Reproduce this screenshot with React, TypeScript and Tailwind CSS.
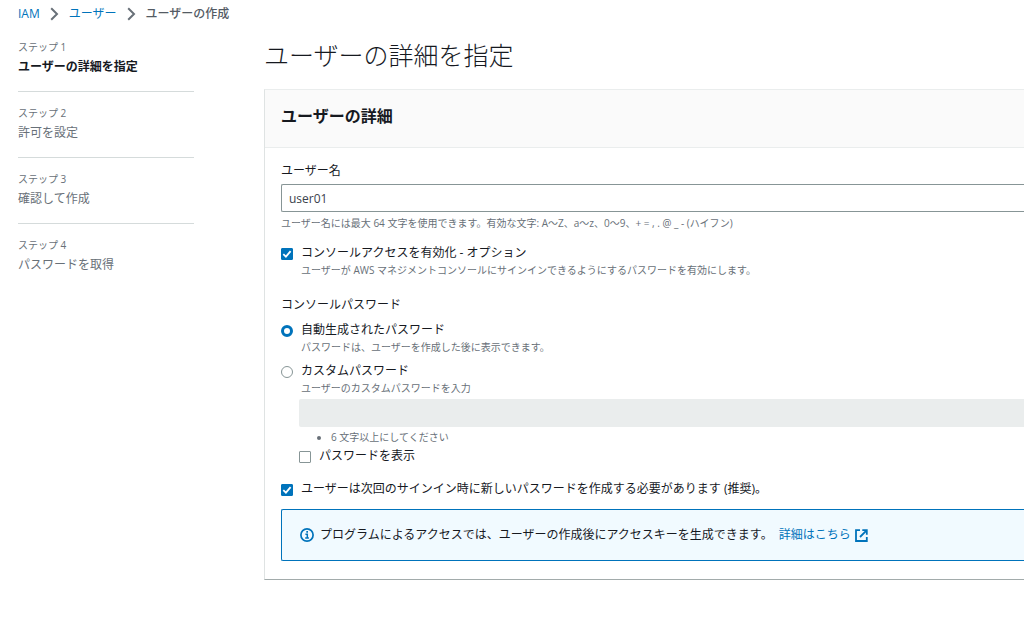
import { ReactNode, useState } from "react";

const steps = [
  "ユーザーの詳細を指定",
  "許可を設定",
  "確認して作成",
  "パスワードを取得",
];

function Chevron() {
  return (
    <svg aria-hidden="true" className="h-[14px] w-[9px] text-[#687078]" viewBox="0 0 9 14" fill="none" stroke="currentColor" strokeWidth="2">
      <path d="M1.2 1.2 7 7l-5.8 5.8" />
    </svg>
  );
}

function Checkbox({
  id,
  label,
  description,
  defaultChecked = false,
}: {
  id: string;
  label: string;
  description?: string;
  defaultChecked?: boolean;
}) {
  const [checked, setChecked] = useState(defaultChecked);
  return (
    <div className="flex gap-2">
      <span className="mt-1 grid size-3 shrink-0">
        <input
          id={id}
          type="checkbox"
          checked={checked}
          onChange={(e) => setChecked(e.target.checked)}
          className="col-start-1 row-start-1 size-3 appearance-none rounded-[1px] border border-[#879596] bg-white checked:border-[#0073bb] checked:bg-[#0073bb]"
        />
        {checked && (
          <svg aria-hidden="true" className="pointer-events-none col-start-1 row-start-1 size-3" viewBox="0 0 12 12" fill="none" stroke="#fff" strokeWidth="1.8">
            <path d="M2.3 6.2 4.9 8.7 9.6 3.2" />
          </svg>
        )}
      </span>
      <div>
        <label htmlFor={id} className="block">{label}</label>
        {description && <Hint>{description}</Hint>}
      </div>
    </div>
  );
}

function Radio({
  id,
  label,
  description,
  defaultChecked = false,
}: {
  id: string;
  label: string;
  description: string;
  defaultChecked?: boolean;
}) {
  return (
    <div className="flex gap-2">
      <input
        id={id}
        type="radio"
        name="console-password"
        defaultChecked={defaultChecked}
        className="mt-1 size-3 shrink-0 appearance-none rounded-full border border-[#879596] bg-white checked:border-[3px] checked:border-[#0073bb]"
      />
      <div>
        <label htmlFor={id} className="block">{label}</label>
        <Hint>{description}</Hint>
      </div>
    </div>
  );
}

function Hint({ children }: { children: ReactNode }) {
  return <p className="text-[10px] leading-4 text-[#687078]">{children}</p>;
}

export default function App() {
  return (
    <div className="overflow-hidden bg-white pb-10 pl-[18px] font-['Open_Sans','Noto_Sans_CJK_JP',sans-serif] text-[12px] leading-[18px] text-[#16191f]">
      <nav aria-label="パンくずリスト" className="pt-[5px]">
        <ol className="flex items-center gap-[10px]">
          <li><a href="#iam" className="text-[#0073bb]">IAM</a></li>
          <li><Chevron /></li>
          <li><a href="#users" className="text-[#0073bb]">ユーザー</a></li>
          <li><Chevron /></li>
          <li className="font-medium text-[#545b64]">ユーザーの作成</li>
        </ol>
      </nav>

      <div className="flex gap-[70px] pt-[15px]">
        <ol className="w-44 shrink-0 divide-y divide-[#d5dbdb]">
          {steps.map((step, i) => (
            <li key={step} className="pt-3 pb-[13px] first:pt-0">
              <p className="text-[10px] leading-[18px] text-[#687078]">ステップ {i + 1}</p>
              <p className={i === 0 ? "text-[12px] leading-[22px] font-bold" : "text-[12px] leading-[22px] text-[#687078]"}>{step}</p>
            </li>
          ))}
        </ol>

        <main className="min-w-0 grow">
          <h1 className="text-[25px] leading-[34px] font-light">ユーザーの詳細を指定</h1>

          <section className="mt-[17px] border-t border-b border-l border-t-[#eaeded] border-b-[#a2abab] border-l-[#dfe3e3]">
            <header className="border-b border-[#eaeded] bg-[#fafafa] pt-[14px] pb-[18px] pl-4">
              <h2 className="text-[16px] leading-[25px] font-bold">ユーザーの詳細</h2>
            </header>

            <form className="pt-[14px] pb-[18px] pl-4">
              <label htmlFor="user-name" className="block">ユーザー名</label>
              <input
                id="user-name"
                type="text"
                defaultValue="user01"
                className="mt-1 block h-7 w-full rounded-l-[2px] border border-r-0 border-[#879596] px-[7px] text-[#3a424c]"
              />
              <div className="mt-[3px]">
                <Hint>ユーザー名には最大 64 文字を使用できます。有効な文字: A〜Z、a〜z、0〜9、+ = , . @ _ - (ハイフン)</Hint>
              </div>

              <div className="mt-[13px]">
                <Checkbox
                  id="console-access"
                  label="コンソールアクセスを有効化 - オプション"
                  description="ユーザーが AWS マネジメントコンソールにサインインできるようにするパスワードを有効にします。"
                  defaultChecked
                />
              </div>

              <fieldset className="mt-[18px]">
                <legend>コンソールパスワード</legend>
                <div className="mt-[7px] flex flex-col gap-[7px]">
                  <Radio
                    id="password-auto"
                    label="自動生成されたパスワード"
                    description="パスワードは、ユーザーを作成した後に表示できます。"
                    defaultChecked
                  />
                  <Radio
                    id="password-custom"
                    label="カスタムパスワード"
                    description="ユーザーのカスタムパスワードを入力"
                  />
                </div>
                <div className="mt-[3px] pl-[18px]">
                  <input
                    type="password"
                    disabled
                    aria-label="カスタムパスワード"
                    className="block h-7 w-full rounded-l-[2px] bg-[#eaeded]"
                  />
                  <ul className="mt-[2px] list-disc pl-8 text-[10px] leading-4 text-[#687078]">
                    <li>6 文字以上にしてください</li>
                  </ul>
                  <div className="mt-[2px]">
                    <Checkbox id="show-password" label="パスワードを表示" />
                  </div>
                </div>
              </fieldset>

              <div className="mt-[15px]">
                <Checkbox
                  id="reset-password"
                  label="ユーザーは次回のサインイン時に新しいパスワードを作成する必要があります (推奨)。"
                  defaultChecked
                />
              </div>

              <div className="mt-[11px] flex items-center gap-[6px] rounded-l-[2px] border border-r-0 border-[#0073bb] bg-[#f1faff] py-4 pl-[18px]">
                <svg aria-hidden="true" className="size-[14px] shrink-0 text-[#0073bb]" viewBox="0 0 14 14" fill="none" stroke="currentColor">
                  <circle cx="7" cy="7" r="6.1" strokeWidth="1.7" />
                  <path d="M5.4 6.3H7.3V10M5.2 10H8.9" strokeWidth="1.5" />
                  <path d="M6.3 3.9H8" strokeWidth="1.6" />
                </svg>
                <p>プログラムによるアクセスでは、ユーザーの作成後にアクセスキーを生成できます。</p>
                <a href="#details" className="flex items-center gap-1 text-[#0073bb]">
                  詳細はこちら
                  <svg aria-hidden="true" className="size-[13px]" viewBox="0 0 13 13" fill="none" stroke="currentColor" strokeWidth="1.8">
                    <path d="M5 1.2H1V12H11.8V8" />
                    <path d="M7.3 1.2H11.8V5.7M11.6 1.4 5 8" />
                  </svg>
                </a>
              </div>
            </form>
          </section>
        </main>
      </div>
    </div>
  );
}
